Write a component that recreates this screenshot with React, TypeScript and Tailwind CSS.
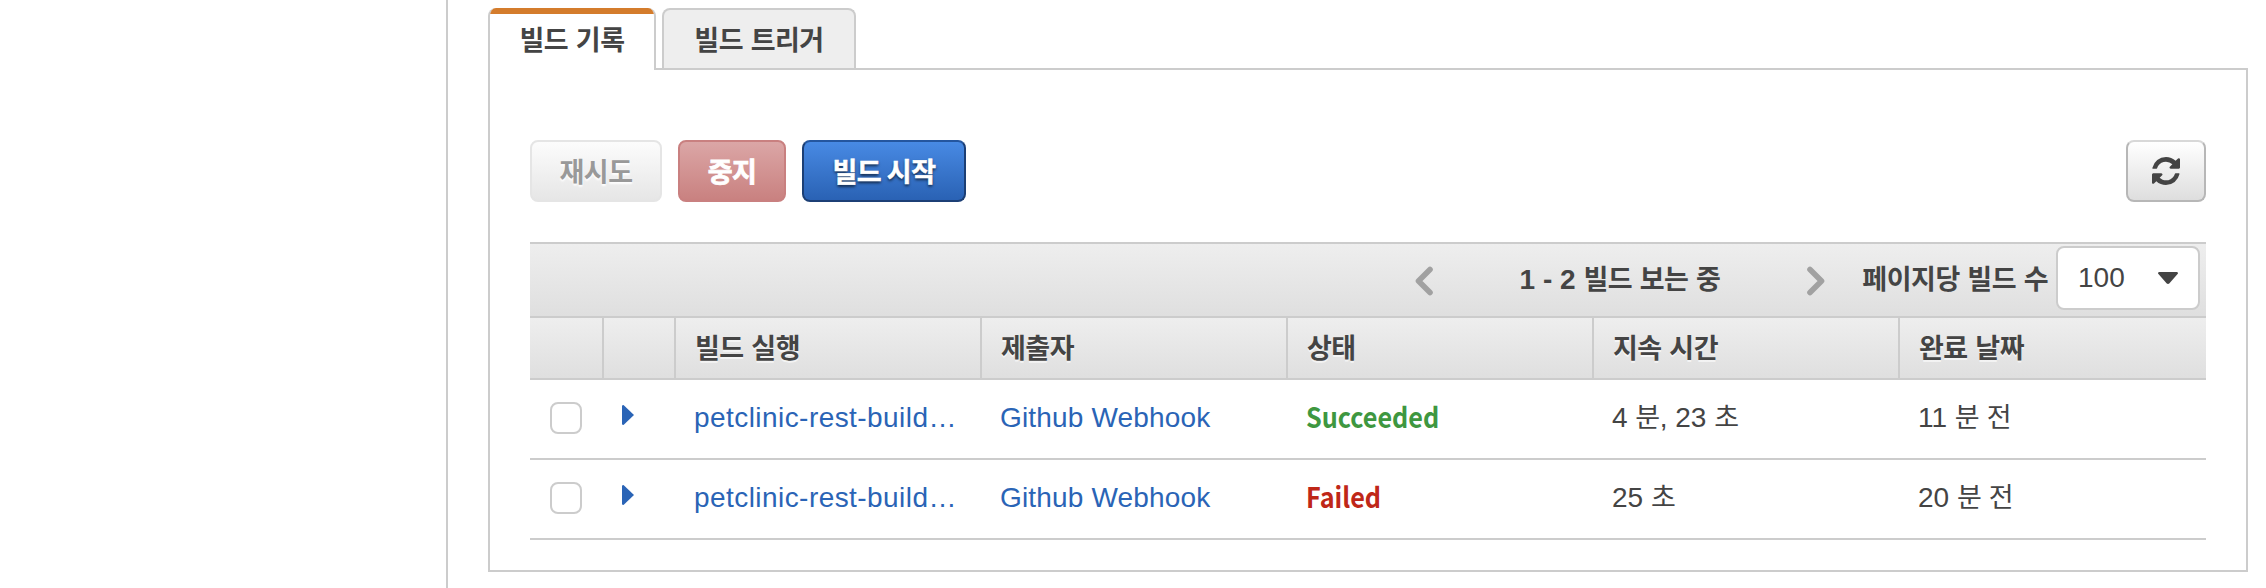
import type { ReactNode } from "react";

const latin = "font-['Liberation_Sans',Arial,sans-serif]";
const korean = "font-['Noto_Sans_CJK_KR',sans-serif] text-[27px] tracking-[-0.5px] [word-spacing:2px]";

function Ko({ children }: { children: ReactNode }) {
  return <span className={`${korean} leading-none`}>{children}</span>;
}

function Chevron({ direction }: { direction: "left" | "right" }) {
  return (
    <svg className="block h-[30px] w-[20px]" viewBox="0 0 20 30" fill="none" stroke="#a1a1a1" strokeWidth="5.6" strokeLinecap="round" strokeLinejoin="round">
      <path d={direction === "left" ? "M16 3.500 L4.500 15 L16 26.500" : "M4 3.500 L15.500 15 L4 26.500"} />
    </svg>
  );
}

function RefreshIcon() {
  return (
    <svg className="block h-[28px] w-[28px]" viewBox="0 0 1536 1536" fill="#444">
      <path d="M1511 928q0 5-1 7-64 268-268 434.500t-478 166.500q-146 0-282.500-55t-243.500-157l-129 129q-19 19-45 19t-45-19-19-45v-448q0-26 19-45t45-19h448q26 0 45 19t19 45-19 45l-137 137q71 66 161 102t187 36q134 0 250-65t186-179q11-17 53-117 8-23 30-23h192q13 0 22.500 9.500t9.500 22.500zM1536 128v448q0 26-19 45t-45 19h-448q-26 0-45-19t-19-45 19-45l138-138q-148-137-349-137-134 0-250 65t-186 179q-11 17-53 117-8 23-30 23h-199q-13 0-22.500-9.500t-9.500-22.500v-7q65-268 270-434.500t480-166.500q146 0 284 55.500t245 156.500l130-129q19-19 45-19t45 19 19 45z" />
    </svg>
  );
}

type Build = { run: string; submitter: string; ok: boolean; duration: ReactNode; finished: ReactNode };

const builds: Build[] = [
  {
    run: "petclinic-rest-build…",
    submitter: "Github Webhook",
    ok: true,
    duration: <>4 <Ko>분</Ko>, 23 <Ko>초</Ko></>,
    finished: <>11 <Ko>분 전</Ko></>,
  },
  {
    run: "petclinic-rest-build…",
    submitter: "Github Webhook",
    ok: false,
    duration: <>25 <Ko>초</Ko></>,
    finished: <>20 <Ko>분 전</Ko></>,
  },
];

const columns = ["빌드 실행", "제출자", "상태", "지속 시간", "완료 날짜"];
const grid = "grid grid-cols-[74px_72px_306px_306px_306px_306px_306px]";

function BuildRow({ build }: { build: Build }) {
  return (
    <div className={`${grid} h-[80px] border-b-2 border-[#ccc] text-[28px] leading-[40px] text-[#444]`}>
      <div className="pt-[22px] pl-[20px]">
        <div className="h-[32px] w-[32px] rounded-[8px] border-2 border-[#ccc] bg-white" />
      </div>
      <div className="pt-[25px] pl-[18px]">
        <svg className="block h-[20px] w-[12px]" viewBox="0 0 12 20" fill="#2a64b6">
          <path d="M0 1 Q0 0 1.500 0 L12 10 L1.500 20 Q0 20 0 19 Z" />
        </svg>
      </div>
      <div className="pt-[18px] pl-[18px] tracking-[0.44px] whitespace-nowrap text-[#2a64b6]">{build.run}</div>
      <div className="pt-[18px] pl-[18px] tracking-[0.16px] whitespace-nowrap text-[#2a64b6]">{build.submitter}</div>
      <div className={`pt-[16px] pl-[18px] font-['Noto_Sans_CJK_KR',sans-serif] font-bold ${build.ok ? "text-[#3e9740]" : "text-[#bf2718]"}`}>
        <span className="inline-block origin-left scale-x-90">{build.ok ? "Succeeded" : "Failed"}</span>
      </div>
      <div className="pt-[18px] pl-[18px] whitespace-nowrap">{build.duration}</div>
      <div className="pt-[18px] pl-[18px] whitespace-nowrap">{build.finished}</div>
    </div>
  );
}

export default function App() {
  return (
    <div className={`${latin} flex h-[588px] w-[2266px] overflow-hidden bg-white text-[#444]`}>
      <aside className="w-[448px] shrink-0 border-r-2 border-[#ccc]" />
      <main className="ml-[40px] w-[1760px] shrink-0 pt-[8px]">
        <nav className={`${korean} relative z-10 flex h-[62px] gap-[6px] leading-[60px] font-bold`}>
          <div className="flex h-[62px] w-[168px] flex-col overflow-hidden rounded-t-[8px] border-x-2 border-[#ccc] bg-white">
            <div className="-mx-[2px] h-[6px] shrink-0 bg-[#d47c2c]" />
            <div className="-mt-[5px] text-center whitespace-nowrap">빌드 기록</div>
          </div>
          <div className="h-[60px] w-[194px] rounded-t-[8px] border-2 border-b-0 border-[#ccc] bg-[#eee] text-center leading-[58px] whitespace-nowrap">
            빌드 트리거
          </div>
        </nav>
        <section className="-mt-[2px] h-[504px] border-2 border-[#ccc] px-[40px] pt-[70px]">
          <div className={`${korean} flex h-[62px] items-start leading-[57px] font-bold`}>
            <button className="flex h-[62px] w-[132px] justify-center rounded-[8px] border-2 border-[#e5e5e5] bg-linear-to-b from-[#fcfcfc] to-[#e6e6e6] text-[#999] [text-shadow:0_2px_2px_#fff]">
              재시도
            </button>
            <button className="ml-[16px] flex h-[62px] w-[108px] justify-center rounded-[8px] border-2 border-[#c98080] bg-linear-to-b from-[#dba6a6] to-[#c98180] text-white [-webkit-text-stroke:0.8px_white]">
              중지
            </button>
            <button className="ml-[16px] flex h-[62px] w-[164px] justify-center rounded-[8px] border-2 border-[#1c3f75] border-t-[#24569f] bg-linear-to-b from-[#488ae4] to-[#2a62b4] text-white [-webkit-text-stroke:0.5px_white] [text-shadow:0_2px_3px_#000a]">
              빌드 시작
            </button>
            <button className="ml-auto flex h-[62px] w-[80px] items-center justify-center rounded-[8px] border-2 border-[#b7b7b7] border-t-[#d8d8d8] bg-linear-to-b from-white to-[#dedede]">
              <RefreshIcon />
            </button>
          </div>

          <div className="mt-[40px]">
            <div className="flex h-[76px] border-y-2 border-[#ccc] bg-linear-to-b from-[#eee] to-[#dfdfdf] pr-[6px] text-[28px] leading-[40px] font-bold">
              <div className="mt-[22px] ml-auto w-[20px]"><Chevron direction="left" /></div>
              <div className="mt-[16px] w-[372px] text-center whitespace-nowrap">1 - 2 <Ko>빌드 보는 중</Ko></div>
              <div className="mt-[22px] w-[20px]"><Chevron direction="right" /></div>
              <div className="mt-[16px] w-[222px] text-right whitespace-nowrap"><Ko>페이지당 빌드 수</Ko></div>
              <div className="mt-[2px] ml-[8px] flex h-[64px] w-[144px] items-center justify-between rounded-[8px] border-2 border-[#ccc] bg-white pr-[20px] pl-[20px] font-normal">
                <span>100</span>
                <svg className="block h-[12px] w-[20px]" viewBox="0 0 20 12" fill="#444">
                  <path d="M1 0 H19 Q20 0 20 1.500 L11.500 11.300 Q10 12.500 8.500 11.300 L0 1.500 Q0 0 1 0 Z" />
                </svg>
              </div>
            </div>
            <div className={`${grid} ${korean} h-[62px] border-b-2 border-[#ccc] bg-linear-to-b from-[#eee] to-[#dfdfdf] leading-[57px] font-bold [text-shadow:0_2px_0_#fff9]`}>
              <div className="border-r-2 border-[#ccc]" />
              <div className="border-r-2 border-[#ccc]" />
              {columns.map((name) => (
                <div key={name} className="border-r-2 border-[#ccc] pl-[19px] last:border-r-0">{name}</div>
              ))}
            </div>
            {builds.map((build, i) => (
              <BuildRow key={i} build={build} />
            ))}
          </div>
        </section>
      </main>
    </div>
  );
}
